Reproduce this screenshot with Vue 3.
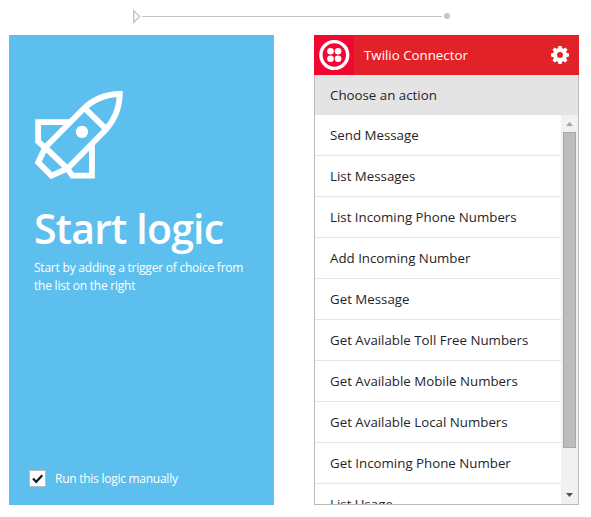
<script setup>
import { ref } from 'vue'

const manual = ref(true)
const actions = [
  'Send Message',
  'List Messages',
  'List Incoming Phone Numbers',
  'Add Incoming Number',
  'Get Message',
  'Get Available Toll Free Numbers',
  'Get Available Mobile Numbers',
  'Get Available Local Numbers',
  'Get Incoming Phone Number',
  'List Usage',
]
const teeth = [0, 45, 90, 135, 180, 225, 270, 315]
</script>

<template>
  <main class="designer">
    <svg class="flow" viewBox="0 0 320 16" width="320" height="16">
      <path d="M1.8 2.8V14.2L7.6 8.5Z" fill="#fff" stroke="#c3c8ce" stroke-width="1.5" />
      <path d="M10 8.5H310" stroke="#bfc4cc" />
      <circle cx="315" cy="8" r="3" fill="#c1c6ce" />
    </svg>
    <div class="cards">
      <section class="start">
        <svg class="rocket" viewBox="45 33 264 265" width="88" height="88">
          <g fill="none" stroke="#fff" stroke-width="17.5">
            <path d="M75 203L187 90Q234 43 300 42Q298 106 256 151L142 267Z" />
            <path d="M193 84L261 150" />
            <path d="M153 127H54V185L75 204L54 248L94 288L142 267L157 288H216V193" />
          </g>
          <circle cx="186" cy="156" r="18.5" fill="#fff" />
        </svg>
        <h1 class="title">Start logic</h1>
        <p class="hint">Start by adding a trigger of choice from<br />the list on the right</p>
        <label class="manual">
          <input v-model="manual" class="native" type="checkbox" />
          <span class="box">
            <svg v-if="manual" viewBox="0 0 15 15" width="15" height="15">
              <path d="M3 7.5L6.2 10.8L12.3 4.2" fill="none" stroke="#101c28" stroke-width="2.2" />
            </svg>
          </span>
          <span class="manual-text">Run this logic manually</span>
        </label>
      </section>

      <section class="connector">
        <header class="head">
          <div class="logo">
            <svg viewBox="0 0 40 40" width="40" height="40">
              <circle cx="20.3" cy="20" r="13.4" fill="none" stroke="#fff" stroke-width="3.4" />
              <g fill="#fff">
                <circle cx="16.5" cy="16.2" r="3.3" />
                <circle cx="24.1" cy="16.2" r="3.3" />
                <circle cx="16.5" cy="23.8" r="3.3" />
                <circle cx="24.1" cy="23.8" r="3.3" />
              </g>
            </svg>
          </div>
          <span class="name">Twilio Connector</span>
          <svg class="gear" viewBox="-9 -9 18 18" width="18" height="18">
            <circle r="5" fill="none" stroke="#fff" stroke-width="4" />
            <path
              v-for="a in teeth"
              :key="a"
              d="M-2.2 -6L-1.6 -9H1.6L2.2 -6Z"
              fill="#fff"
              :transform="`rotate(${a})`"
            />
          </svg>
        </header>
        <div class="body">
          <div class="choose">Choose an action</div>
          <div class="scroller">
            <ul class="list">
              <li v-for="item in actions" :key="item" class="row">{{ item }}</li>
            </ul>
            <div class="bar">
              <svg class="arrow" viewBox="0 0 17 17" width="17" height="17">
                <path d="M5 11L8.5 7L12 11Z" fill="#a3a3a3" />
              </svg>
              <div class="thumb"></div>
              <svg class="arrow down" viewBox="0 0 17 17" width="17" height="17">
                <path d="M5 6L8.5 10L12 6Z" fill="#505050" />
              </svg>
            </div>
          </div>
        </div>
      </section>
    </div>
  </main>
</template>

<style>
body {
  margin: 0;
  background: #fff;
}
</style>

<style scoped>
.designer {
  box-sizing: border-box;
  width: 591px;
  height: 517px;
  padding: 8px 12px 12px 9px;
  overflow: hidden;
  font-family: 'Open Sans', 'Noto Sans', sans-serif;
}
.flow {
  display: block;
  margin: 0 0 11px 123px;
}
.cards {
  display: flex;
  gap: 40px;
}
.start {
  display: flex;
  flex-direction: column;
  box-sizing: border-box;
  width: 265px;
  height: 470px;
  padding: 56px 20px 18px 26px;
  background: #5dbfed;
  color: #fff;
}
.rocket {
  flex: none;
}
.title {
  margin: 19px 0 1px -1px;
  font-size: 41px;
  line-height: 60px;
  font-weight: 600;
  letter-spacing: -0.8px;
  white-space: nowrap;
}
.hint {
  margin: 0 0 0 -1px;
  font-size: 12px;
  line-height: 18px;
  letter-spacing: -0.22px;
  white-space: nowrap;
}
.manual {
  display: flex;
  align-items: center;
  gap: 9px;
  margin: auto 0 0 -6px;
  font-size: 12px;
  line-height: 16px;
}
.native {
  display: none;
}
.box {
  display: flex;
  width: 15px;
  height: 15px;
  border: 1px solid #b9bcbe;
  background: #fff;
}
.manual-text {
  letter-spacing: -0.26px;
}
.connector {
  width: 265px;
  height: 470px;
  display: flex;
  flex-direction: column;
}
.head {
  display: flex;
  align-items: center;
  height: 40px;
  background: #e32129;
  color: #fff;
}
.logo {
  width: 40px;
  height: 40px;
  background: #f20732;
}
.name {
  margin-left: 10px;
  font-size: 13.3px;
}
.gear {
  margin: 0 10px 0 auto;
}
.body {
  display: flex;
  flex: 1;
  flex-direction: column;
  min-height: 0;
  border: solid #bbb;
  border-width: 0 1px 1px;
  color: #1f2428;
  font-size: 13.3px;
}
.choose {
  height: 40px;
  padding-left: 15px;
  background: #e4e4e4;
  line-height: 40px;
}
.scroller {
  display: flex;
  flex: 1;
  min-height: 0;
  overflow: hidden;
}
.list {
  flex: 1;
  margin: 0;
  padding: 0;
  list-style: none;
}
.row {
  height: 40px;
  padding-left: 15px;
  border-bottom: 1px solid #e6e6e6;
  line-height: 40px;
  white-space: nowrap;
}
.bar {
  display: flex;
  flex-direction: column;
  align-items: center;
  width: 17px;
  background: #f1f1f1;
}
.arrow {
  flex: none;
}
.thumb {
  box-sizing: border-box;
  width: 13px;
  height: 316px;
  border: 1px solid #a8a8a8;
  background: #bcbcbc;
}
.down {
  margin-top: auto;
}
</style>
